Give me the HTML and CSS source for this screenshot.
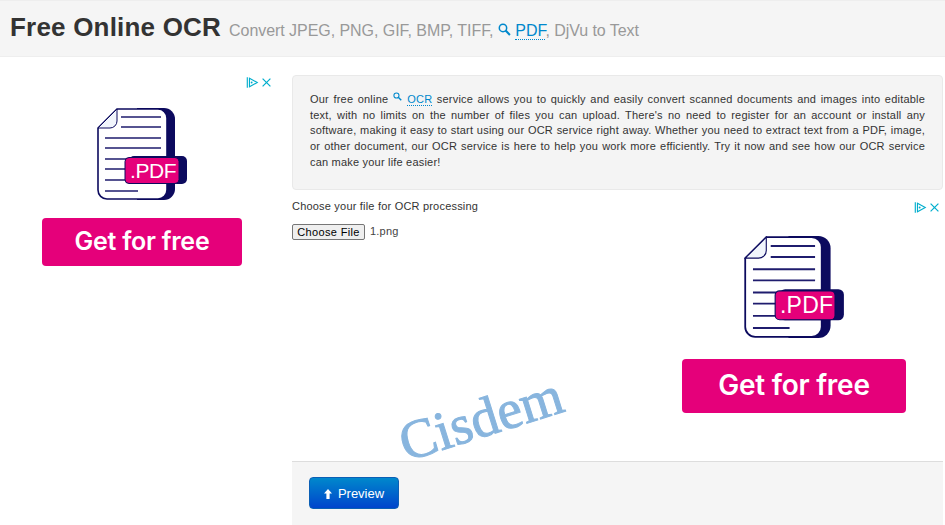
FILE: index.html
```html
<!DOCTYPE html>
<html lang="en">
<head>
<meta charset="utf-8">
<title>Free Online OCR</title>
<link rel="stylesheet" href="styles.css">
</head>
<body>
<svg class="defs" width="0" height="0" aria-hidden="true">
  <defs>
    <symbol id="search" viewBox="0 0 12 12">
      <circle cx="4.6" cy="4.6" r="3.4" fill="none" stroke="currentColor" stroke-width="1.4"/>
      <path d="M7 7l4 4" stroke="currentColor" stroke-width="1.9" fill="none"/>
    </symbol>
    <symbol id="adchoice" viewBox="0 0 15 15">
      <path d="M1.5 1.5v12M4 2.5L13 7.5 4 12.5z" fill="none" stroke="#00aecd" stroke-width="1.3"/>
      <circle cx="6.5" cy="7.5" r="1.1" fill="#00aecd"/>
    </symbol>
    <symbol id="adclose" viewBox="0 0 15 15">
      <path d="M3 3l9 9M12 3l-9 9" fill="none" stroke="#00aecd" stroke-width="1.4"/>
    </symbol>
    <symbol id="doc" viewBox="0 0 90 92">
      <path d="M40 0H67a11 11 0 0 1 11 11v70a11 11 0 0 1-11 11H40z" fill="#0c0a5e"/>
      <path d="M20 1H61a9 9 0 0 1 9 9v72a9 9 0 0 1-9 9H10a9 9 0 0 1-9-9V20z" fill="#fff" stroke="#0c0a5e" stroke-width="1.6"/>
      <path d="M20 1L1 20H13a7 7 0 0 0 7-7z" fill="#f1f5fc" stroke="#0c0a5e" stroke-width="1"/>
      <path d="M24 9h40M24 19h40M8 30h56M8 40h56M8 51h22M8 61h22M8 72h22M8 83h33" stroke="#1f1c6e" stroke-width="1.7" fill="none"/>
      <rect x="32" y="48" width="58" height="28" rx="5" fill="#0c0a5e"/>
      <rect x="28" y="49.5" width="54" height="26" rx="4" fill="#e5007a" stroke="#0c0a5e" stroke-width="1"/>
    </symbol>
  </defs>
</svg>

<header class="topbar">
  <h1 class="title">Free Online OCR</h1>
  <p class="subtitle">Convert JPEG, PNG, GIF, BMP, TIFF, <svg class="search search-lg"><use href="#search"/></svg> <a class="kw" href="#">PDF</a>, DjVu to Text</p>
</header>

<div class="page">
  <aside class="side">
    <div class="ad ad-left">
      <div class="ad-marks"><svg class="mark"><use href="#adchoice"/></svg><svg class="mark"><use href="#adclose"/></svg></div>
      <div class="doc">
        <svg class="doc-art"><use href="#doc"/></svg>
        <span class="doc-label">.PDF</span>
      </div>
      <a class="cta" href="#">Get for free</a>
    </div>
  </aside>

  <main class="main">
    <section class="intro">
      <p>Our free online <svg class="search"><use href="#search"/></svg> <a class="kw" href="#">OCR</a> service allows you to quickly and easily convert scanned documents and images into editable text, with no limits on the number of files you can upload. There's no need to register for an account or install any software, making it easy to start using our OCR service right away. Whether you need to extract text from a PDF, image, or other document, our OCR service is here to help you work more efficiently. Try it now and see how our OCR service can make your life easier!</p>
    </section>

    <section class="upload">
      <div class="file-col">
        <label class="file-label" for="file">Choose your file for OCR processing</label>
        <div class="file-row"><button class="file-btn" id="file" type="button">Choose File</button><span class="file-name">1.png</span></div>
      </div>
      <div class="ad ad-right">
        <div class="ad-marks"><svg class="mark"><use href="#adchoice"/></svg><svg class="mark"><use href="#adclose"/></svg></div>
        <div class="doc">
          <svg class="doc-art"><use href="#doc"/></svg>
          <span class="doc-label">.PDF</span>
        </div>
        <a class="cta" href="#">Get for free</a>
      </div>
      <div class="watermark">Cisdem</div>
    </section>

    <footer class="actions">
      <button class="preview" type="button"><svg class="arrow" viewBox="0 0 8 10"><path d="M4 0L8 4.6H5.6V10H2.4V4.6H0z" fill="#fff"/></svg>Preview</button>
    </footer>
  </main>
</div>
</body>
</html>
```
FILE: styles.css
```css
* { box-sizing: border-box; }
html, body { margin: 0; padding: 0; }
body {
  width: 945px;
  height: 525px;
  overflow: hidden;
  background: #fff;
  color: #333;
  font-family: "Liberation Sans", Arial, sans-serif;
  font-size: 11px;
  line-height: 1.42857;
}
.defs { position: absolute; }

.topbar {
  display: flex;
  align-items: baseline;
  gap: 8px;
  height: 57px;
  padding: 10px 10px 0;
  background: #f5f5f5;
  border-top: 1px solid #eee;
  border-bottom: 1px solid #eee;
}
.title {
  margin: 0;
  font-size: 26px;
  line-height: 32px;
  font-weight: 700;
  letter-spacing: 0.2px;
  color: #333;
}
.subtitle {
  margin: 0;
  font-size: 16px;
  line-height: 20px;
  letter-spacing: -0.05px;
  color: #999;
}
.kw {
  color: #0088cc;
  text-decoration: none;
  border-bottom: 1px dotted #0088cc;
}
.search {
  width: 9px;
  height: 9px;
  margin-right: 1px;
  color: #0088cc;
  vertical-align: 2px;
}
.search-lg { width: 13px; height: 13px; margin-right: 0; vertical-align: 0; }

.page { display: flex; height: 468px; }
.side { flex: 0 0 292px; padding: 19px 8px 0 0; }
.main { flex: 0 0 651px; display: flex; flex-direction: column; padding-top: 18px; }

.intro {
  height: 115px;
  padding: 16px 17px;
  background: #f4f4f4;
  border: 1px solid #e9e9e9;
  border-radius: 4px;
  letter-spacing: 0.2px;
}
.intro p { margin: 0; text-align: justify; }

.upload {
  position: relative;
  flex: 1;
  display: flex;
  justify-content: space-between;
}
.file-col { padding-top: 9px; letter-spacing: 0.2px; }
.file-label { display: block; color: #333; }
.file-row { display: flex; align-items: center; margin-top: 9px; }
.file-btn {
  width: 73px;
  height: 16px;
  padding: 0;
  background: #efefef;
  border: 1px solid #767676;
  border-radius: 2px;
  font: 11px/14px "Liberation Sans", Arial, sans-serif;
  letter-spacing: 0.35px;
  color: #000;
}
.file-name { margin-left: 5px; color: #444; }

.watermark {
  position: absolute;
  left: 105px;
  top: 196px;
  font-family: "Liberation Serif", serif;
  font-size: 55px;
  line-height: 66px;
  color: #88b5de;
  -webkit-text-stroke: 1px #88b5de;
  transform: rotate(-17.5deg);
}

.actions {
  height: 64px;
  padding: 15px 17px;
  background: #f5f5f5;
  border-top: 1px solid #ddd;
}
.preview {
  display: flex;
  align-items: center;
  justify-content: center;
  gap: 6px;
  width: 90px;
  height: 32px;
  padding: 1px 0 0;
  border: 1px solid #0b5fb5;
  border-radius: 4px;
  background: linear-gradient(#0088cc, #0044cc);
  color: #fff;
  font: 13px/18px "Liberation Sans", Arial, sans-serif;
}
.arrow { width: 8px; height: 10px; }

.ad { display: flex; flex-direction: column; align-items: center; }
.ad-marks { display: flex; gap: 1px; align-self: flex-end; }
.mark { width: 13px; height: 13px; }
.doc { position: relative; }
.doc-art { display: block; width: 100%; height: 100%; }
.doc-label {
  position: absolute;
  color: #fff;
  font-family: "Liberation Sans", sans-serif;
  line-height: 1;
}
.cta {
  display: flex;
  align-items: center;
  justify-content: center;
  background: #e5007a;
  border-radius: 4px;
  color: #fff;
  font-family: Inter, "Liberation Sans", sans-serif;
  font-weight: 600;
  text-decoration: none;
}

.ad-left { width: 284px; }
.ad-left .ad-marks { padding-right: 11px; margin-bottom: 19px; }
.ad-left .doc { width: 90px; height: 92px; }
.ad-left .doc-label { left: 33px; top: 52px; font-size: 21px; letter-spacing: -0.4px; }
.ad-left .cta { width: 200px; height: 48px; margin-top: 18px; font-size: 25px; letter-spacing: -0.25px; }

.ad-right { width: 298px; padding-top: 11px; }
.ad-right .ad-marks { padding-right: 2px; margin-bottom: 22px; }
.ad-right .doc { width: 102px; height: 102px; }
.ad-right .doc-label { left: 37px; top: 58px; font-size: 23px; letter-spacing: 0.2px; }
.ad-right .cta { width: 224px; height: 54px; margin-top: 21px; font-size: 28px; letter-spacing: -0.25px; }
```
